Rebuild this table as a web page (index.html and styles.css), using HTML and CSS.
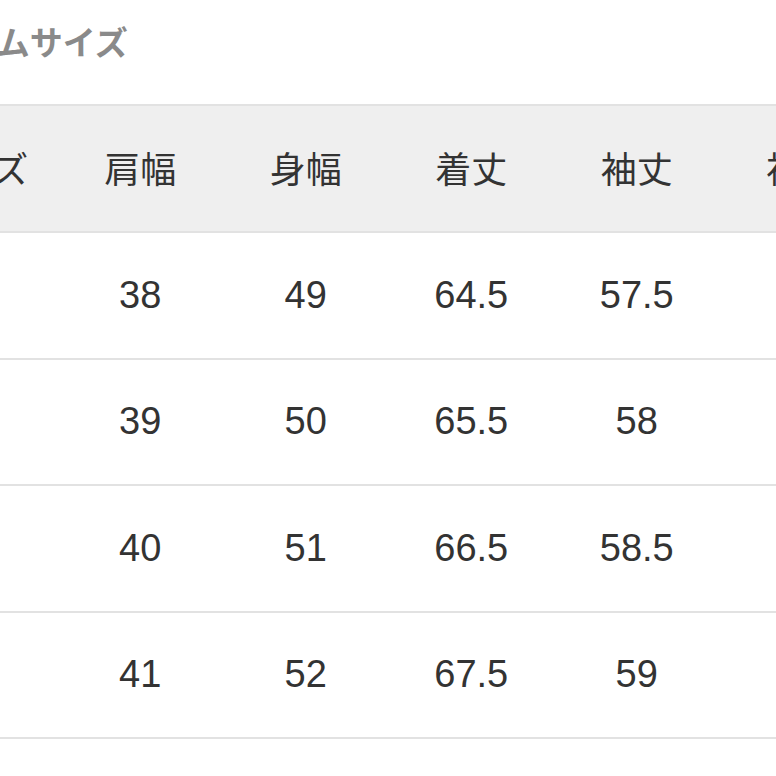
FILE: index.html
```html
<!DOCTYPE html>
<html lang="ja">
<head>
<meta charset="utf-8">
<title>アイテムサイズ</title>
<link rel="stylesheet" href="styles.css">
</head>
<body>
<div class="page">
  <h2 class="title">アイテムサイズ</h2>
  <table class="size">
    <thead>
      <tr><th>サイズ</th><th>肩幅</th><th>身幅</th><th>着丈</th><th>袖丈</th><th>袖口</th></tr>
    </thead>
    <tbody>
      <tr><td>S</td><td>38</td><td>49</td><td>64.5</td><td>57.5</td><td>21</td></tr>
      <tr><td>M</td><td>39</td><td>50</td><td>65.5</td><td>58</td><td>22</td></tr>
      <tr><td>L</td><td>40</td><td>51</td><td>66.5</td><td>58.5</td><td>23</td></tr>
      <tr><td>XL</td><td>41</td><td>52</td><td>67.5</td><td>59</td><td>24</td></tr>
      <tr><td>XXL</td><td>42</td><td>53</td><td>68.5</td><td>59.5</td><td>25</td></tr>
    </tbody>
  </table>
</div>
</body>
</html>
```
FILE: styles.css
```css
html, body {
  margin: 0;
  padding: 0;
  background: #ffffff;
  overflow: hidden;
}
body {
  font-family: "Liberation Sans", "Noto Sans CJK JP", sans-serif;
  color: #333333;
}
.page {
  margin-left: -108px;
  width: 993px;
}
.title {
  margin: 0;
  padding: 25px 0 46px 9px;
  height: 33px;
  font-size: 33px;
  line-height: 33px;
  font-weight: bold;
  color: #8a8a8a;
  font-family: "Noto Sans CJK JP", sans-serif;
}
.size {
  border-collapse: separate;
  border-spacing: 0;
  width: 993px;
  table-layout: fixed;
}
.size th,
.size td {
  width: 165.5px;
  padding: 0;
  text-align: center;
  vertical-align: middle;
  font-size: 38px;
  border-bottom: 2px solid #e2e2e2;
}
.size th {
  background: #efefef;
  border-top: 2px solid #e2e2e2;
  height: 121px;
  padding-bottom: 4px;
  font-size: 36px;
  font-weight: normal;
  font-family: "Noto Sans CJK JP", sans-serif;
  color: #333333;
}
.size td {
  height: 124.5px;
}
```
